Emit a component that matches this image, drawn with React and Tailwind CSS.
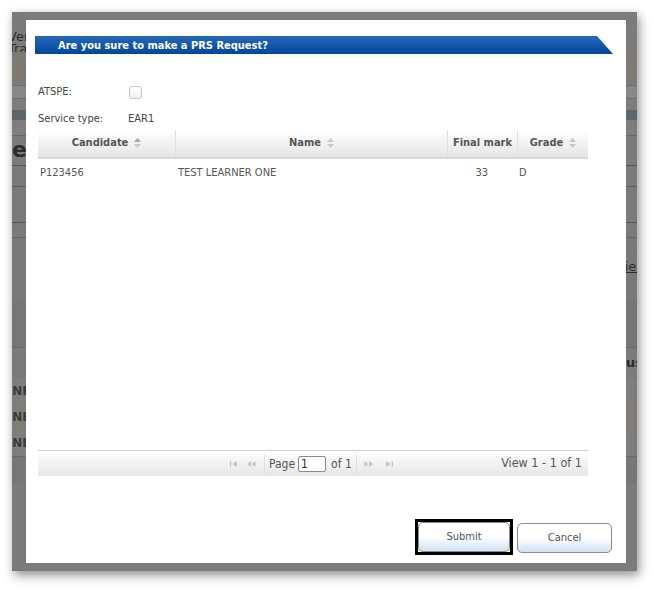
import React from "react";

const font = { fontFamily: '"DejaVu Sans Condensed", "DejaVu Sans", Verdana, sans-serif' };

const SortArrows = ({ active }) => (
  <svg width="7" height="10" viewBox="0 0 7 10" className="inline-block ml-[6px] -mt-[1px] align-middle">
    <path d="M3.5 0 L7 4 L0 4 Z" fill={active ? "#a8a8a8" : "#c8c8c8"} />
    <path d="M0 6 L7 6 L3.5 10 Z" fill="#c8c8c8" />
  </svg>
);

// pager glyphs: first / prev / next / last
const PagerIcon = ({ kind }) => {
  const c = "#c4c4c4";
  return (
    <svg width="10" height="8" viewBox="0 0 10 8" className="block">
      {kind === "first" && (
        <>
          <rect x="1" y="1" width="1.2" height="6" fill={c} />
          <path d="M8 1 L3.5 4 L8 7 Z" fill={c} />
        </>
      )}
      {kind === "prev" && (
        <>
          <path d="M5 1 L1 4 L5 7 Z" fill={c} />
          <path d="M9.5 1 L5.5 4 L9.5 7 Z" fill={c} />
        </>
      )}
      {kind === "next" && (
        <>
          <path d="M0.5 1 L4.5 4 L0.5 7 Z" fill={c} />
          <path d="M5 1 L9 4 L5 7 Z" fill={c} />
        </>
      )}
      {kind === "last" && (
        <>
          <path d="M2 1 L6.5 4 L2 7 Z" fill={c} />
          <rect x="7.8" y="1" width="1.2" height="6" fill={c} />
        </>
      )}
    </svg>
  );
};

const columns = [
  { label: "Candidate", width: "w-[138px]", sort: true, active: true },
  { label: "Name", width: "w-[272px]", sort: true },
  { label: "Final mark", width: "w-[70px]" },
  { label: "Grade", width: "w-[70px]", sort: true },
];

// page under the modal overlay, dimmed
const BackgroundPage = () => (
  <div className="flex flex-col text-[#2b2b2b]" style={{ fontFamily: '"DejaVu Sans", Verdana, sans-serif' }}>
    <div className="h-[18px] bg-[#7b7b7b]" />
    <div className="h-[22px] bg-[#7c7b79] text-[13px] leading-[12px] -ml-[4px] pt-[1px]">
      <div>Ver</div>
      <div>Tra</div>
    </div>
    <div className="h-[33px] bg-[#7f7b74]" />
    <div className="h-[13px] bg-[#878787] border-t border-[#6d6d6d]" />
    <div className="h-[12px] bg-[#7d7d7d] border-t border-[#6f6f6f]" />
    <div className="h-[10px] bg-[#5e656c]" />
    <div className="h-[15px] bg-[#7e7e7e]" />
    <div className="h-[30px] bg-[#7b7b7b] border-t border-[#6a6a6a] text-[22px] font-bold leading-[28px] -ml-[17px]">
      Review
    </div>
    <div className="h-[21px] bg-[#7a7a7a] border-t border-[#555]" />
    <div className="h-[36px] bg-[#7a7a7a] border-t border-[#606060]" />
    <div className="h-[15px] bg-[#7a7a7a] border-t border-[#555]" />
    <div className="h-[12px] bg-[#797979] border-t border-[#666]" />
    <div className="h-[35px] bg-[#797979] flex justify-end text-[13px] leading-[12px] -mr-[10px]">
      <div className="text-right">
        <div>w</div>
        <div className="underline">view</div>
      </div>
    </div>
    <div className="h-[16px] bg-[#797979]" />
    <div className="h-[48px] bg-[#767676] border-b border-[#6a6a6a]" />
    <div className="h-[30px] bg-[#7a7a7a] flex justify-end items-center text-[13px] font-bold -mr-[6px]">Status</div>
    <div className="h-[26px] bg-[#7e7e7e] flex items-center text-[12px] font-bold text-[#3a3a3a] -ml-[10px]">ONE</div>
    <div className="h-[26px] bg-[#807d78] flex items-center text-[12px] font-bold text-[#3a3a3a] -ml-[10px]">ONE</div>
    <div className="h-[27px] bg-[#7e7e7e] flex items-center text-[12px] font-bold text-[#3a3a3a] -ml-[10px] border-b border-[#6a6a6a]">
      ONE
    </div>
    <div className="h-[26px] bg-[#777]" />
    <div className="flex-1 bg-[#7b7b7b]" />
  </div>
);

const App = () => {
  return (
    <div className="w-[655px] h-[589px] bg-white pt-[12px] pl-[12px]" style={font}>
      <div className="relative w-[625px] h-[559px] overflow-hidden bg-[#7b7b7b] shadow-[2px_4px_10px_rgba(0,0,0,0.45)]">
        <BackgroundPage />

        {/* confirmation dialog */}
        <div className="absolute left-[14px] top-[8px] w-[600px] h-[543px] bg-white flex flex-col">
          <div className="mt-[16px] ml-[9px] w-[578px] h-[18px] bg-gradient-to-b from-[#2568ba] to-[#00479c] [clip-path:polygon(0_0,calc(100%-16px)_0,100%_100%,0_100%)] flex items-center pl-[23px]">
            <span className="text-white font-bold text-[11px] leading-none">Are you sure to make a PRS Request?</span>
          </div>

          <div className="px-[12px] text-[11px] text-[#444]">
            <div className="mt-[32px] h-[13px] flex items-center">
              <span className="w-[91px]">ATSPE:</span>
              <span className="w-[13px] h-[13px] rounded-[3px] border border-[#c6c6c6] bg-gradient-to-b from-white to-[#f0f0f0]" />
            </div>
            <div className="mt-[13px] h-[14px] flex items-center">
              <span className="w-[90px]">Service type:</span>
              <span>EAR1</span>
            </div>
          </div>

          {/* results grid */}
          <div className="mt-[4px] ml-[12px] w-[550px] h-[346px] flex flex-col text-[11px]">
            <div className="h-[29px] flex bg-gradient-to-b from-white to-[#e5e5e5] border-b-2 border-[#d8d8d8]">
              {columns.map((col, i) => (
                <div
                  key={col.label}
                  className={`${col.width} flex items-center justify-center font-bold text-[#555] ${i < columns.length - 1 ? "border-r border-[#e0e0e0]" : ""}`}
                >
                  {col.label}
                  {col.sort && <SortArrows active={col.active} />}
                </div>
              ))}
            </div>
            <div className="flex-1">
              <div className="h-[28px] flex items-center text-[#555]">
                <span className="w-[138px] pl-[2px]">P123456</span>
                <span className="w-[272px] pl-[2px]">TEST LEARNER ONE</span>
                <span className="w-[70px] text-right pr-[30px]">33</span>
                <span className="w-[70px] pl-[1px]">D</span>
              </div>
            </div>
            <div className="h-[26px] flex items-center border-t border-[#cfcfcf] bg-gradient-to-b from-white to-[#e6e6e6] text-[12px] text-[#555]">
              <div className="w-[550px] flex items-center">
                <div className="flex items-center ml-[191px] h-[20px]">
                  <span className="mr-[7px]"><PagerIcon kind="first" /></span>
                  <span className="mr-[8px]"><PagerIcon kind="prev" /></span>
                  <span className="w-px h-[18px] bg-[#dedede] mr-[4px]" />
                  <span>Page</span>
                  <span className="ml-[3px] w-[28px] h-[16px] border border-[#8a8a8a] rounded-[2px] bg-white text-[12px] leading-[14px] pl-[2px] text-[#333]">1</span>
                  <span className="ml-[5px]">of 1</span>
                  <span className="w-px h-[18px] bg-[#dedede] ml-[4px] mr-[7px]" />
                  <span className="mr-[10px]"><PagerIcon kind="next" /></span>
                  <span><PagerIcon kind="last" /></span>
                </div>
                <span className="ml-auto mr-[6px] text-[12.5px]">View 1 - 1 of 1</span>
              </div>
            </div>
          </div>

          <div className="flex-1" />

          <div className="flex justify-end items-end gap-[4px] pr-[14px] pb-[10px] text-[11px] text-[#555]">
            {/* focused button: square black focus frame */}
            <div className="border-[3px] border-black mb-[-2px]">
              <button className="block w-[92px] h-[30px] rounded-[5px] border border-[#8c8c8c] bg-gradient-to-b from-white via-white to-[#cfe2f3]">
                Submit
              </button>
            </div>
            <button className="w-[95px] h-[30px] rounded-[5px] border border-[#8c8c8c] bg-gradient-to-b from-white via-white to-[#cfe2f3]">
              Cancel
            </button>
          </div>
        </div>
      </div>
    </div>
  );
};

export default App;
